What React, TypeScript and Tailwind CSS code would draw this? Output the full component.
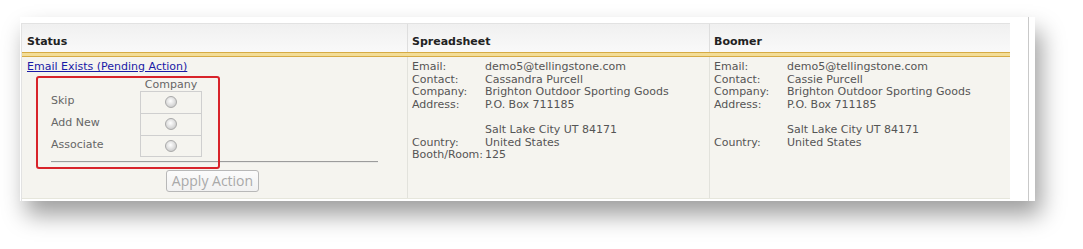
const font = { fontFamily: '"DejaVu Sans", Verdana, sans-serif' };

const spreadsheet: [string, string][] = [
  ["Email:", "demo5@tellingstone.com"],
  ["Contact:", "Cassandra Purcell"],
  ["Company:", "Brighton Outdoor Sporting Goods"],
  ["Address:", "P.O. Box 711185"],
  ["", "\u00a0"],
  ["", "Salt Lake City UT 84171"],
  ["Country:", "United States"],
  ["Booth/Room:", "125"],
];

const boomer: [string, string][] = [
  ["Email:", "demo5@tellingstone.com"],
  ["Contact:", "Cassie Purcell"],
  ["Company:", "Brighton Outdoor Sporting Goods"],
  ["Address:", "P.O. Box 711185"],
  ["", "\u00a0"],
  ["", "Salt Lake City UT 84171"],
  ["Country:", "United States"],
];

const Radio = () => (
  <span className="block h-[12px] w-[12px] rounded-full border border-[#a9a9a9] bg-[radial-gradient(circle_at_45%_40%,#ffffff,#e2e2e2_45%,#bdbdbd)]" />
);

const Details = ({ rows }: { rows: [string, string][] }) => (
  <div className="grid grid-cols-[73px_1fr] text-[11px] leading-[12.6px] text-[#555]">
    {rows.map(([k, v], i) => (
      <div key={i} className="contents">
        <span>{k}</span>
        <span>{v}</span>
      </div>
    ))}
  </div>
);

export default function App() {
  return (
    <div className="h-[249px] w-[1083px] overflow-hidden bg-white pl-[20px] pt-[17px]" style={font}>
      <div className="flex h-[184px] w-[1015px] bg-white shadow-[6px_14px_22px_rgba(0,0,0,0.38)]">
        <div className="ml-[1px] mt-[6px] flex w-[989px] flex-col border-l border-t border-[#e2e2e2]">
          {/* header */}
          <div className="grid h-[28px] grid-cols-[385px_302px_1fr] bg-[linear-gradient(#f0f0f0,#f9f9f9)] text-[11px] font-bold leading-[14px] text-[#222]">
            <div className="pl-[5px] pt-[11px]">Status</div>
            <div className="border-l border-[#dedede] pl-[4px] pt-[11px]">Spreadsheet</div>
            <div className="border-l border-[#dedede] pl-[4px] pt-[11px]">Boomer</div>
          </div>
          <div className="h-[5px] border-y border-[#d6ab45] bg-[#f3dd97]" />
          {/* body */}
          <div className="grid h-[142px] grid-cols-[385px_302px_1fr] border-b border-[#e6e6dc] bg-[#f5f4ef]">
            <div className="relative pl-[5px] pt-[4px] text-[11px] leading-[12.6px]">
              <a href="#" className="text-[#1a1aa6] underline">
                Email Exists (Pending Action)
              </a>
              <div className="ml-[24px] mt-[5px] w-[327px]">
                <div className="grid grid-cols-[89px_62px] text-[#666]">
                  <span />
                  <span className="h-[12px] text-center leading-[12px]">Company</span>
                  {["Skip", "Add New", "Associate"].map((l, i) => (
                    <div key={l} className="contents">
                      <span className="flex h-[22px] items-center">{l}</span>
                      <span
                        className={`flex h-[22px] items-center justify-center border-x border-t border-[#cfcfcf] ${
                          i === 2 ? "border-b" : ""
                        }`}
                      >
                        <Radio />
                      </span>
                    </div>
                  ))}
                </div>
                <div className="mt-[4px] h-[2px] border-t border-[#9c9c9c] bg-[#e9e9e6]" />
                <div className="flex justify-center pr-[4px] pt-[7px]">
                  <button
                    className="h-[22px] w-[93px] rounded-[3px] border border-[#b8b8b8] bg-[linear-gradient(#fbfbfb,#f1f1f1)] text-[14px] leading-[20px] text-[#a9a9a9]"
                    style={{ fontFamily: '"Open Sans", "Liberation Sans", sans-serif' }}
                  >
                    Apply Action
                  </button>
                </div>
              </div>
              {/* annotation */}
              <div className="absolute left-[14px] top-[19px] h-[93px] w-[184px] rounded-[3px] border-2 border-[#d8232a]" />
            </div>
            <div className="border-l border-[#e2e2dc] pl-[4px] pt-[4px]">
              <Details rows={spreadsheet} />
            </div>
            <div className="border-l border-[#e2e2dc] pl-[4px] pt-[4px]">
              <Details rows={boomer} />
            </div>
          </div>
        </div>
        <div className="ml-[18px] w-[1px] bg-[#c9c9c9]" />
      </div>
    </div>
  );
}
